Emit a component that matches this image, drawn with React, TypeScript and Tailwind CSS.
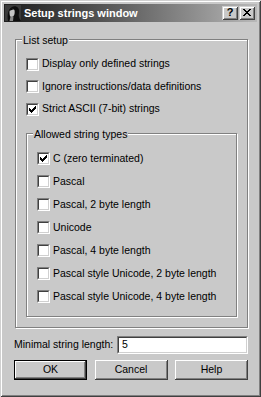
const bg = "bg-[#c9c9c9]";

const Check = ({ checked }: { checked?: boolean }) => (
  <span className="flex h-[13px] w-[13px] shrink-0 border border-t-[#808080] border-l-[#808080] border-b-white border-r-white">
    <span className="flex h-full w-full border border-t-[#404040] border-l-[#404040] border-b-[#d0d0d0] border-r-[#d0d0d0] bg-white">
      {checked && (
        <svg width="7" height="7" viewBox="0 0 7 7" className="m-[1px]" shapeRendering="crispEdges">
          <rect x="6" y="0" width="1" height="1" fill="#000" />
          <rect x="5" y="1" width="2" height="1" fill="#000" />
          <rect x="0" y="2" width="1" height="1" fill="#000" />
          <rect x="4" y="2" width="3" height="1" fill="#000" />
          <rect x="0" y="3" width="2" height="1" fill="#000" />
          <rect x="3" y="3" width="3" height="1" fill="#000" />
          <rect x="0" y="4" width="5" height="1" fill="#000" />
          <rect x="1" y="5" width="3" height="1" fill="#000" />
          <rect x="2" y="6" width="1" height="1" fill="#000" />
        </svg>
      )}
    </span>
  </span>
);

const Row = ({ label, checked, h }: { label: string; checked?: boolean; h: string }) => (
  <div className={`flex items-center gap-[3px] ${h}`}>
    <Check checked={checked} />
    <span className="whitespace-nowrap">{label}</span>
  </div>
);

const Group = ({ title, className, children }: { title: string; className: string; children: React.ReactNode }) => (
  <div className={`relative border border-[#808080] shadow-[1px_1px_0_#fff,inset_1px_1px_0_#fff] ${className}`}>
    <span className={`absolute -top-[6px] left-[6px] px-[1px] leading-[13px] whitespace-nowrap ${bg}`}>{title}</span>
    {children}
  </div>
);

const Btn = ({ label, def }: { label: string; def?: boolean }) => (
  <div className={`h-[20px] w-[73px] ${def ? "border border-black" : ""}`}>
    <div className="flex h-full w-full items-center justify-center shadow-[inset_-1px_-1px_0_#404040,inset_1px_1px_0_#fff,inset_-2px_-2px_0_#808080]">
      {label}
    </div>
  </div>
);

const types = [
  "C (zero terminated)",
  "Pascal",
  "Pascal, 2 byte length",
  "Unicode",
  "Pascal, 4 byte length",
  "Pascal style Unicode, 2 byte length",
  "Pascal style Unicode, 4 byte length",
];

export default function App() {
  return (
    <div
      className={`flex h-[397px] w-[261px] flex-col p-[4px] font-['Liberation_Sans',Arial,sans-serif] text-[10.5px] text-black ${bg} shadow-[inset_1px_1px_0_#d0d0d0,inset_-1px_-1px_0_#404040,inset_2px_2px_0_#fff,inset_-2px_-2px_0_#808080]`}
    >
      {/* caption */}
      <div className="flex h-[18px] items-center bg-gradient-to-r from-[#1e1e1e] to-[#b8b8b8]">
        <svg width="16" height="16" viewBox="0 0 16 16" className="ml-[1px]">
          <rect width="16" height="16" fill="#3a3a3a" />
          <path d="M3 16 C2 10 3 4 7 2 C11 0 15 3 14 8 C13 12 15 14 16 16 Z" fill="#0e0e0e" />
          <path d="M4.5 7 C4.5 4.5 6 3.5 8 3.8 C9.5 4 10 6 9.6 8.5 C9.3 10.5 8 12 6.5 12 C5 12 4.5 10 4.5 7 Z" fill="#c4c4c4" />
          <path d="M4 6 C5 3 8 2.5 10.5 4.5 C8 4.2 6.5 5 4 6 Z" fill="#0e0e0e" />
          <path d="M5.5 11.5 L8.5 11.5 L8 16 L4.5 16 Z" fill="#8a8a8a" />
        </svg>
        <span className="ml-[3px] text-[11px] font-bold leading-none text-white">Setup strings window</span>
        <div className="ml-auto mr-[2px] flex gap-[1px]">
          <div className={`flex h-[14px] w-[16px] items-center justify-center ${bg} shadow-[inset_1px_1px_0_#d0d0d0,inset_-1px_-1px_0_#404040,inset_2px_2px_0_#fff,inset_-2px_-2px_0_#808080]`}>
            <span className="-mt-[1px] text-[11px] font-bold leading-none">?</span>
          </div>
          <div className={`flex h-[14px] w-[16px] items-center justify-center ${bg} shadow-[inset_1px_1px_0_#d0d0d0,inset_-1px_-1px_0_#404040,inset_2px_2px_0_#fff,inset_-2px_-2px_0_#808080]`}>
            <svg width="8" height="7" viewBox="0 0 8 7" shapeRendering="crispEdges" className="-mt-[1px]">
              <rect x="0" y="0" width="2" height="1" />
              <rect x="6" y="0" width="2" height="1" />
              <rect x="1" y="1" width="2" height="1" />
              <rect x="5" y="1" width="2" height="1" />
              <rect x="2" y="2" width="4" height="1" />
              <rect x="3" y="3" width="2" height="1" />
              <rect x="2" y="4" width="4" height="1" />
              <rect x="1" y="5" width="2" height="1" />
              <rect x="5" y="5" width="2" height="1" />
              <rect x="0" y="6" width="2" height="1" />
              <rect x="6" y="6" width="2" height="1" />
            </svg>
          </div>
        </div>
      </div>

      {/* body */}
      <div className="flex flex-col pl-[10px] pr-[9px] pt-[17px]">
        <Group title="List setup" className="ml-[1px] px-[10px] pb-[10px] pt-[13px]">
          <Row h="h-[22.5px]" label="Display only defined strings" />
          <Row h="h-[22.5px]" label="Ignore instructions/data definitions" />
          <Row h="h-[22.5px]" label="Strict ASCII (7-bit) strings" checked />
          <Group title="Allowed string types" className="mt-[12.5px] pb-[8px] pl-[10px] pt-[13px]">
            {types.map((t, i) => (
              <Row key={t} h="h-[23px]" label={t} checked={i === 0} />
            ))}
          </Group>
        </Group>

        <div className="mt-[8px] flex h-[18px] items-center">
          <span className="whitespace-nowrap">Minimal string length:</span>
          <div className="ml-auto h-full w-[131px] border border-t-[#808080] border-l-[#808080] border-b-white border-r-white">
            <div className="flex h-full items-center border border-t-[#404040] border-l-[#404040] border-b-[#d0d0d0] border-r-[#d0d0d0] bg-white pl-[3px]">
              5
            </div>
          </div>
        </div>

        <div className="mt-[6px] flex justify-between">
          <Btn label="OK" def />
          <Btn label="Cancel" />
          <Btn label="Help" />
        </div>
      </div>
    </div>
  );
}
